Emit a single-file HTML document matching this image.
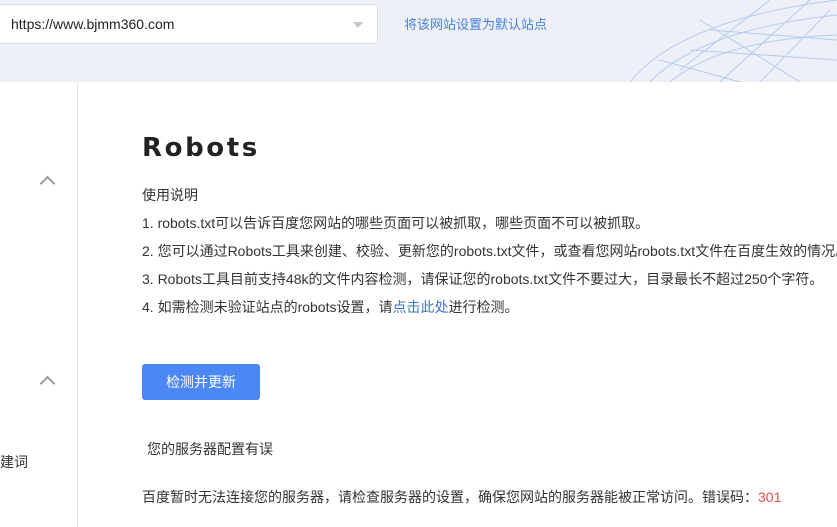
<!DOCTYPE html><html><head><meta charset="utf-8"><style>
body{margin:0;width:837px;height:527px;overflow:hidden;background:#fff;font-family:"Liberation Sans","Noto Sans CJK SC",sans-serif;color:#333;position:relative}
.hd{position:absolute;left:0;top:0;width:837px;height:82px;background:#edf0f7;overflow:hidden}
.sel{position:absolute;left:-4px;top:4px;width:380px;height:38px;background:#fff;border:1px solid #d8dbe3;border-radius:3px;font-size:14px;line-height:38px;color:#222}
.sel span{margin-left:14px}
.tri{position:absolute;right:14px;top:17px;width:0;height:0;border-left:5px solid transparent;border-right:5px solid transparent;border-top:6px solid #c4c4c4}
.lk{position:absolute;left:404px;top:14px;font-size:13px;color:#4b7fd6}
.side{position:absolute;left:77px;top:82px;width:1px;height:445px;background:#e6e6e6}
.chev{position:absolute;left:42px;width:9px;height:9px;border-left:2px solid #999;border-top:2px solid #999;transform:rotate(45deg)}
.t{position:absolute;left:142px;font-size:14px;white-space:nowrap}
h1{position:absolute;left:142px;top:133px;margin:0;font-size:26px;letter-spacing:2.6px;font-family:"DejaVu Sans",sans-serif;font-weight:bold;color:#222}
.btn{position:absolute;left:142px;top:364px;width:118px;height:36px;background:#4c87f6;border-radius:3px;color:#fff;font-size:14px;line-height:36px;text-align:center}
</style></head><body>
<div class="hd">
<svg style="position:absolute;left:620px;top:0" width="217" height="82"><g stroke="#8fb2ea" stroke-width="1" fill="none" opacity=".6">
<path d="M10 82 Q60 20 217 0"/><path d="M30 82 Q80 30 217 15"/><path d="M50 82 Q100 40 217 35"/><path d="M70 50 L217 60"/><path d="M90 30 L217 40"/><path d="M60 70 L150 0"/><path d="M100 82 L190 0"/><path d="M140 82 L210 10"/><path d="M40 60 L120 82"/><path d="M80 20 L180 82"/></g></svg>
<div class="sel"><span>https://www.bjmm360.com</span><div class="tri"></div></div>
<div class="lk">将该网站设置为默认站点</div>
</div>
<div class="side"></div>
<div class="chev" style="top:178px"></div>
<div class="chev" style="top:378px"></div>
<div class="t" style="left:0;top:452px">建词</div>
<h1>Robots</h1>
<div class="t" style="top:185px">使用说明</div>
<div class="t" style="top:213px">1. robots.txt可以告诉百度您网站的哪些页面可以被抓取，哪些页面不可以被抓取。</div>
<div class="t" style="top:241px">2. 您可以通过Robots工具来创建、校验、更新您的robots.txt文件，或查看您网站robots.txt文件在百度生效的情况。</div>
<div class="t" style="top:269px">3. Robots工具目前支持48k的文件内容检测，请保证您的robots.txt文件不要过大，目录最长不超过250个字符。</div>
<div class="t" style="top:297px">4. 如需检测未验证站点的robots设置，请<span style="color:#3a73d6">点击此处</span>进行检测。</div>
<div class="btn">检测并更新</div>
<div class="t" style="left:147px;top:439px">您的服务器配置有误</div>
<div class="t" style="top:487px">百度暂时无法连接您的服务器，请检查服务器的设置，确保您网站的服务器能被正常访问。错误码：<span style="color:#e2504a">301</span></div>
</body></html>
